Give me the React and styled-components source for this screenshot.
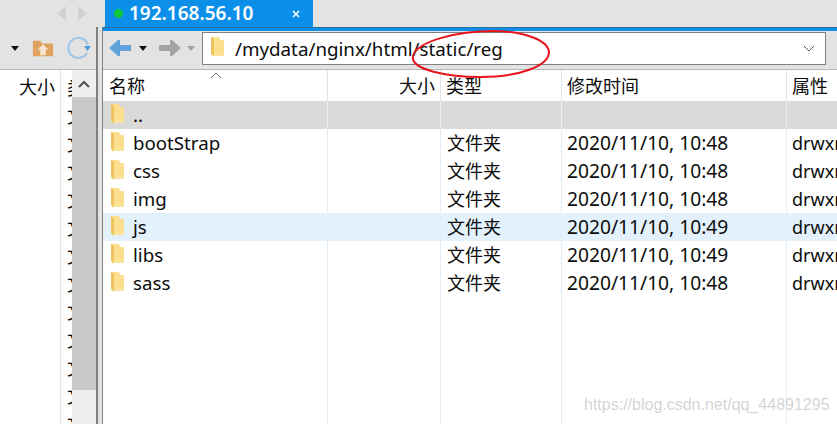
import styled, { createGlobalStyle } from "styled-components";

const GlobalStyle = createGlobalStyle`
  html, body { margin: 0; padding: 0; background: #fff; }
  * { box-sizing: border-box; }
`;

const FONT = `"Noto Sans", "Noto Sans CJK SC", sans-serif`;

const Window = styled.div`
  position: relative;
  width: 837px;
  height: 424px;
  overflow: hidden;
  background: #e3e3e3;
  font-family: ${FONT};
  font-size: 18px;
  color: #0c0c0c;
  display: flex;
  flex-direction: column;
`;

const TabBar = styled.div`
  height: 27px;
  flex: none;
  display: flex;
  background: #e3e3e3;
`;

const NavArrows = styled.div`
  width: 105px;
  flex: none;
  display: flex;
  justify-content: flex-end;
  align-items: center;
  gap: 12px;
  padding: 0 18px 0 0;
`;

const Tab = styled.div`
  width: 208px;
  flex: none;
  background: #0b8fe8;
  color: #fff;
  font-weight: 600;
  font-size: 19px;
  display: flex;
  align-items: center;
  padding: 0 13px 0 9px;
`;

const TabDot = styled.span`
  width: 9px;
  height: 9px;
  border-radius: 50%;
  background: #10c93a;
  margin-right: 6px;
`;

const TabTitle = styled.span`
  flex: 1;
  line-height: 27px;
`;

const Panes = styled.div`
  flex: 1;
  display: flex;
  min-height: 0;
`;

const LeftPane = styled.div`
  width: 98px;
  flex: none;
  display: flex;
  flex-direction: column;
  border-right: 2px solid #808080;
`;

const Splitter = styled.div`
  width: 4px;
  flex: none;
  background: #e3e3e3;
`;

const RightPane = styled.div`
  flex: 1;
  display: flex;
  flex-direction: column;
  border-left: 1px solid #808080;
  min-width: 0;
`;

const BlueLine = styled.div`
  height: 4px;
  flex: none;
  background: #0b8fe8;
  border-top: 1px solid #2a6f9e;
`;

const Toolbar = styled.div`
  height: 39px;
  flex: none;
  display: flex;
  align-items: center;
  padding-bottom: 4px;
  background: #e3e3e3;
  border-bottom: 1px solid #b9b9b9;
`;

const LeftToolbar = styled(Toolbar)`
  margin-top: 4px;
  padding-left: 11px;
  gap: 13px;
`;

const RightToolbar = styled(Toolbar)`
  padding-left: 6px;
`;

const Caret = styled.span`
  width: 0;
  height: 0;
  margin-left: ${(p) => p.$gap || 0}px;
  border-left: 4px solid transparent;
  border-right: 4px solid transparent;
  border-top: 5px solid ${(p) => p.$color || "#111"};
`;

const ToolArrow = styled.svg`
  margin-left: ${(p) => p.$gap || 0}px;
  transform: ${(p) => (p.$flip ? "scaleX(-1)" : "none")};
`;

const AddressBox = styled.div`
  width: 624px;
  height: 33px;
  margin-left: 7px;
  background: #fff;
  border: 1px solid #808080;
  display: flex;
  align-items: center;
  padding: 0 10px 0 7px;
`;

const AddressText = styled.span`
  flex: 1;
  margin-left: 11px;
  font-size: 18.75px;
`;

const LeftBody = styled.div`
  flex: 1;
  display: flex;
  background: #fff;
  min-height: 0;
`;

const LeftList = styled.div`
  flex: 1;
  display: flex;
  min-width: 0;
`;

const SizeCol = styled.div`
  width: 61px;
  flex: none;
  border-right: 1px solid #dbe6f4;
  text-align: right;
  padding: 4px 5px 0 0;
  line-height: 26px;
`;

const ClippedCol = styled.div`
  flex: 1;
  overflow: hidden;
  white-space: nowrap;
  padding: 4px 0 0 6px;
  line-height: 28px;
`;

const Scrollbar = styled.div`
  width: 24px;
  flex: none;
  background: #efefef;
  display: flex;
  flex-direction: column;
`;

const ScrollUp = styled.div`
  height: 27px;
  flex: none;
  display: flex;
  align-items: center;
  justify-content: center;
`;

const ScrollThumb = styled.div`
  height: 293px;
  flex: none;
  background: #c9c9c9;
`;

const Table = styled.div`
  flex: 1;
  background: #fff;
  display: flex;
  flex-direction: column;
  position: relative;
  min-height: 0;
`;

const gridCols = "225px 113px 121px 225px 1fr";

const HeaderRow = styled.div`
  height: 31px;
  flex: none;
  display: grid;
  grid-template-columns: ${gridCols};
  background: #fff;
`;

const HeaderCell = styled.div`
  position: relative;
  padding: 0 5px;
  line-height: 32px;
  white-space: nowrap;
  border-right: 1px solid #dde6ef;
  text-align: ${(p) => (p.$right ? "right" : "left")};
  &:first-child { padding-left: 6px; }
  &:last-child { border-right: none; }
`;

const SortMark = styled.svg`
  position: absolute;
  left: 107px;
  top: 2px;
`;

const Row = styled.div`
  height: 28px;
  flex: none;
  display: grid;
  grid-template-columns: ${gridCols};
  background: ${(p) => p.$bg || "transparent"};
`;

const Cell = styled.div`
  display: flex;
  align-items: center;
  overflow: hidden;
  white-space: nowrap;
  padding-left: ${(p) => p.$pad || 5}px;
  line-height: 28px;
  font-size: ${(p) => p.$size || 18}px;
  border-right: 1px solid #e3ecf7;
  &:last-child { border-right: none; }
`;

const NameCell = styled(Cell)`
  padding-left: 7px;
  gap: 9px;
`;

const Filler = styled.div`
  flex: 1;
  display: grid;
  grid-template-columns: ${gridCols};
`;

const FillerCol = styled.div`
  border-right: 1px solid #e3ecf7;
  &:last-child { border-right: none; }
`;

const Ellipse = styled.svg`
  position: absolute;
  left: 408px;
  top: 26px;
  pointer-events: none;
`;

const Watermark = styled.div`
  position: absolute;
  left: 584px;
  top: 396px;
  font-family: "Liberation Sans", sans-serif;
  font-size: 16px;
  color: rgba(150, 150, 150, 0.42);
  white-space: nowrap;
`;

const FolderIcon = () => (
  <svg width="14" height="22" viewBox="0 0 14 22">
    <path d="M1 0h8l1 3h4v15H3l-2 -1z" fill="#fbdf8e" />
    <path d="M1 0l3 2v18l-3-3z" fill="#eec25f" />
    <path d="M4 16h10v3H4z" fill="#fce49a" />
  </svg>
);

const Arrow = ({ color, flip, gap }) => (
  <ToolArrow width="22" height="18" viewBox="0 0 22 18" $flip={flip} $gap={gap}>
    <path d="M0 9L9 1h2v5h11v6H11v5H9z" fill={color} />
  </ToolArrow>
);

const rows = [
  { name: "..", bg: "#d9d9d9" },
  { name: "bootStrap", type: "文件夹", time: "2020/11/10, 10:48", attr: "drwxr-xr-x" },
  { name: "css", type: "文件夹", time: "2020/11/10, 10:48", attr: "drwxr-xr-x" },
  { name: "img", type: "文件夹", time: "2020/11/10, 10:48", attr: "drwxr-xr-x" },
  { name: "js", type: "文件夹", time: "2020/11/10, 10:49", attr: "drwxr-xr-x", bg: "#e3f1fc" },
  { name: "libs", type: "文件夹", time: "2020/11/10, 10:49", attr: "drwxr-xr-x" },
  { name: "sass", type: "文件夹", time: "2020/11/10, 10:48", attr: "drwxr-xr-x" },
];

const clipped = ["类型", ...Array.from({ length: 12 }, () => "文件夹")];

export default function App() {
  return (
    <Window>
      <GlobalStyle />
      <TabBar>
        <NavArrows>
          <svg width="9" height="15" viewBox="0 0 9 15"><path d="M9 0v15L0 7.5z" fill="#d0d0d0" /></svg>
          <svg width="9" height="15" viewBox="0 0 9 15"><path d="M0 0v15l9-7.5z" fill="#d0d0d0" /></svg>
        </NavArrows>
        <Tab>
          <TabDot />
          <TabTitle>192.168.56.10</TabTitle>
          <svg width="8" height="8" viewBox="0 0 8 8"><path d="M1 1l6 6M7 1L1 7" stroke="#fff" strokeWidth="1.6" /></svg>
        </Tab>
      </TabBar>
      <Panes>
        <LeftPane>
          <LeftToolbar>
            <Caret />
            <svg width="22" height="20" viewBox="0 0 24 20">
              <path d="M1 2h8l2 3h12v14H1z" fill="#dfa35f" />
              <path d="M12 6l6 6h-3v6h-6v-6H6z" fill="#f6e6d2" />
            </svg>
            <svg width="24" height="24" viewBox="0 0 24 24" fill="none">
              <path d="M21 9A10 10 0 1 0 20 17" stroke="#9cc6ea" strokeWidth="2" />
              <path d="M17 10h7l-3.500 5z" fill="#4e9bdc" />
            </svg>
          </LeftToolbar>
          <LeftBody>
            <LeftList>
              <SizeCol>大小</SizeCol>
              <ClippedCol>
                {clipped.map((t, i) => (
                  <div key={i}>{t}</div>
                ))}
              </ClippedCol>
            </LeftList>
            <Scrollbar>
              <ScrollUp>
                <svg width="12" height="8" viewBox="0 0 12 8" fill="none">
                  <path d="M1 7l5-5 5 5" stroke="#505050" strokeWidth="2" />
                </svg>
              </ScrollUp>
              <ScrollThumb />
            </Scrollbar>
          </LeftBody>
        </LeftPane>
        <Splitter />
        <RightPane>
          <BlueLine />
          <RightToolbar>
            <Arrow color="#62a2da" />
            <Caret $gap={8} />
            <Arrow color="#a3a3a3" flip gap={12} />
            <Caret $color="#a3a3a3" $gap={6} />
            <AddressBox>
              <FolderIcon />
              <AddressText>/mydata/nginx/html/static/reg</AddressText>
              <svg width="12" height="7" viewBox="0 0 12 7" fill="none">
                <path d="M1 1l5 5 5-5" stroke="#555" strokeWidth="1" />
              </svg>
            </AddressBox>
          </RightToolbar>
          <Table>
            <HeaderRow>
              <HeaderCell>
                名称
                <SortMark width="12" height="7" viewBox="0 0 12 7" fill="none">
                  <path d="M1 6l5-5 5 5" stroke="#777" strokeWidth="1" />
                </SortMark>
              </HeaderCell>
              <HeaderCell $right>大小</HeaderCell>
              <HeaderCell>类型</HeaderCell>
              <HeaderCell>修改时间</HeaderCell>
              <HeaderCell>属性</HeaderCell>
            </HeaderRow>
            {rows.map((r) => (
              <Row key={r.name} $bg={r.bg}>
                <NameCell $size={18.7}>
                  <FolderIcon />
                  {r.name}
                </NameCell>
                <Cell />
                <Cell $pad={6}>{r.type}</Cell>
                <Cell $size={19.2}>{r.time}</Cell>
                <Cell>{r.attr}</Cell>
              </Row>
            ))}
            <Filler>
              <FillerCol />
              <FillerCol />
              <FillerCol />
              <FillerCol />
              <FillerCol />
            </Filler>
          </Table>
        </RightPane>
      </Panes>
      <Ellipse width="146" height="56" viewBox="0 0 146 56" fill="none">
        <path
          d="M5 30C9 15 50 5 85 5c30 0 55 9 56 21c0 14-30 25-68 25C40 51 2 44 5 30z"
          stroke="#e8141c"
          strokeWidth="2"
        />
      </Ellipse>
      <Watermark>https://blog.csdn.net/qq_44891295</Watermark>
    </Window>
  );
}
